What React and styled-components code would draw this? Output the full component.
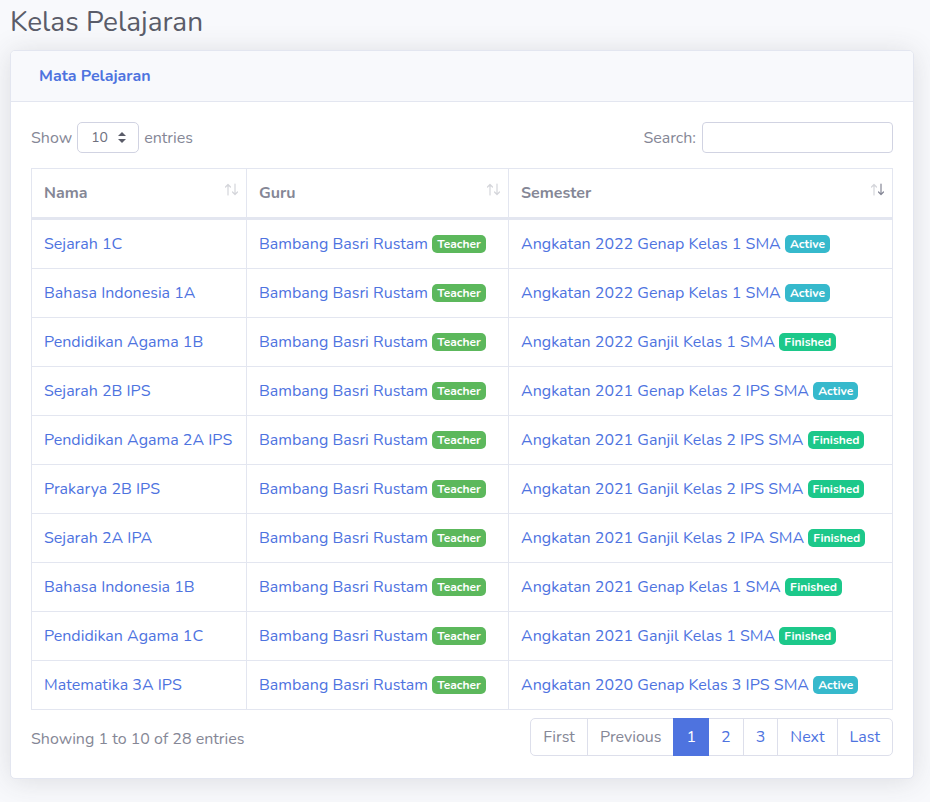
import React from "react";
import styled, { createGlobalStyle } from "styled-components";

const GlobalStyle = createGlobalStyle`
  * { box-sizing: border-box; }
  body {
    margin: 0;
    background: #f8f9fc;
    font-family: "Nunito", "Lato", "Liberation Sans", sans-serif;
    color: #858796;
    font-size: 16px;
    line-height: 1.5;
  }
`;

const rows = [
  ["Sejarah 1C", "Angkatan 2022 Genap Kelas 1 SMA", "active"],
  ["Bahasa Indonesia 1A", "Angkatan 2022 Genap Kelas 1 SMA", "active"],
  ["Pendidikan Agama 1B", "Angkatan 2022 Ganjil Kelas 1 SMA", "finished"],
  ["Sejarah 2B IPS", "Angkatan 2021 Genap Kelas 2 IPS SMA", "active"],
  ["Pendidikan Agama 2A IPS", "Angkatan 2021 Ganjil Kelas 2 IPS SMA", "finished"],
  ["Prakarya 2B IPS", "Angkatan 2021 Ganjil Kelas 2 IPS SMA", "finished"],
  ["Sejarah 2A IPA", "Angkatan 2021 Ganjil Kelas 2 IPA SMA", "finished"],
  ["Bahasa Indonesia 1B", "Angkatan 2021 Genap Kelas 1 SMA", "finished"],
  ["Pendidikan Agama 1C", "Angkatan 2021 Ganjil Kelas 1 SMA", "finished"],
  ["Matematika 3A IPS", "Angkatan 2020 Genap Kelas 3 IPS SMA", "active"],
];

const badgeColors = {
  teacher: "#5cb85c",
  active: "#36b9cc",
  finished: "#1cc88a",
};

const App = () => {
  return (
    <Page>
      <GlobalStyle />
      <Title>Kelas Pelajaran</Title>
      <Card>
        <CardHeader>Mata Pelajaran</CardHeader>
        <CardBody>
          <Controls>
            <Label>
              Show
              <Select>
                <span>10</span>
                <svg width="8" height="11" viewBox="0 0 8 11">
                  <path d="M4 0 L8 4 L0 4 Z M4 11 L8 7 L0 7 Z" fill="#5a5c69" />
                </svg>
              </Select>
              entries
            </Label>
            <Label>
              Search:
              <SearchInput />
            </Label>
          </Controls>
          <Table>
            <colgroup>
              <col style={{ width: 215 }} />
              <col style={{ width: 262 }} />
              <col />
            </colgroup>
            <thead>
              <tr>
                <Th>
                  Nama
                  <Sort />
                </Th>
                <Th>
                  Guru
                  <Sort />
                </Th>
                <Th>
                  Semester
                  <Sort desc />
                </Th>
              </tr>
            </thead>
            <tbody>
              {rows.map(([name, semester, status]) => (
                <tr key={name}>
                  <Td>
                    <Link>{name}</Link>
                  </Td>
                  <Td>
                    <Link>Bambang Basri Rustam</Link>{" "}
                    <Badge $color={badgeColors.teacher}>Teacher</Badge>
                  </Td>
                  <Td>
                    <Link>{semester}</Link>{" "}
                    <Badge $color={badgeColors[status]}>
                      {status === "active" ? "Active" : "Finished"}
                    </Badge>
                  </Td>
                </tr>
              ))}
            </tbody>
          </Table>
          <Footer>
            <Info>Showing 1 to 10 of 28 entries</Info>
            <Pagination>
              <PageItem $disabled>First</PageItem>
              <PageItem $disabled>Previous</PageItem>
              <PageItem $active>1</PageItem>
              <PageItem>2</PageItem>
              <PageItem>3</PageItem>
              <PageItem>Next</PageItem>
              <PageItem>Last</PageItem>
            </Pagination>
          </Footer>
        </CardBody>
      </Card>
    </Page>
  );
};

// up/down arrows used by the sortable headers
const Sort = ({ desc }) => (
  <SortIcon>
    <svg width="15" height="13" viewBox="0 0 15 13">
      <g fill="none" strokeWidth="1.2" strokeLinecap="round" strokeLinejoin="round">
        <path d="M4 12 V1.5 M1.5 4 L4 1.5 L6.5 4" stroke="#858796" strokeOpacity="0.35" />
        <path
          d="M11 1 V11.5 M8.5 9 L11 11.5 L13.5 9"
          stroke="#858796"
          strokeOpacity={desc ? 1 : 0.35}
        />
      </g>
    </svg>
  </SortIcon>
);

export default App;

const Page = styled.div`
  padding: 0 16px 24px 10px;
`;

const Title = styled.h1`
  margin: 0 0 7px 0;
  padding-top: 2px;
  font-size: 28px;
  font-weight: 400;
  line-height: 41px;
  color: #5a5c69;
`;

const Card = styled.div`
  background: #fff;
  border: 1px solid #e3e6f0;
  border-radius: 5px;
  box-shadow: 0 2px 28px 0 rgba(58, 59, 69, 0.15);
  overflow: hidden;
`;

const CardHeader = styled.div`
  background: #f8f9fc;
  border-bottom: 1px solid #e3e6f0;
  padding: 13px 28px;
  font-size: 16px;
  font-weight: 700;
  color: #4e73df;
  line-height: 24px;
`;

const CardBody = styled.div`
  padding: 20px 20px 22px;
`;

const Controls = styled.div`
  display: flex;
  justify-content: space-between;
  align-items: center;
  margin-bottom: 15px;
`;

const Label = styled.label`
  display: flex;
  align-items: center;
  gap: 5px;
  font-size: 16px;
`;

const Select = styled.div`
  width: 62px;
  height: 31px;
  border: 1px solid #d1d3e2;
  border-radius: 5px;
  display: flex;
  align-items: center;
  justify-content: space-between;
  padding: 0 12px 0 13px;
  font-size: 14px;
  color: #6e707e;
`;

const SearchInput = styled.div`
  width: 191px;
  height: 31px;
  border: 1px solid #d1d3e2;
  border-radius: 4px;
  margin-left: 1px;
`;

const Table = styled.table`
  width: 100%;
  border-collapse: collapse;
  table-layout: fixed;
  border: 1px solid #e3e6f0;
`;

const Th = styled.th`
  position: relative;
  text-align: left;
  padding: 12px 12px;
  font-weight: 700;
  color: #858796;
  border: 1px solid #e3e6f0;
  border-bottom: 3px solid #e3e6f0;
  line-height: 24px;
`;

const SortIcon = styled.span`
  position: absolute;
  right: 7px;
  top: 14px;
  display: flex;
`;

const Td = styled.td`
  padding: 12px 12px;
  border: 1px solid #e3e6f0;
  line-height: 24px;
  white-space: nowrap;
`;

const Link = styled.a`
  color: #4e73df;
  text-decoration: none;
`;

const Badge = styled.span`
  display: inline-block;
  background: ${(p) => p.$color};
  color: #fff;
  font-size: 12px;
  font-weight: 700;
  line-height: 1;
  padding: 3px 5px;
  border-radius: 5px;
  vertical-align: 1px;
`;

const Footer = styled.div`
  display: flex;
  justify-content: space-between;
  align-items: center;
  margin-top: 8px;
`;

const Info = styled.div`
  padding-top: 3px;
`;

const Pagination = styled.div`
  display: flex;
  border-radius: 5px;
`;

const PageItem = styled.span`
  display: block;
  padding: 6px 12px;
  line-height: 24px;
  border: 1px solid #dddfeb;
  margin-left: -1px;
  color: ${(p) => (p.$active ? "#fff" : p.$disabled ? "#858796" : "#4e73df")};
  background: ${(p) => (p.$active ? "#4e73df" : "#fff")};
  border-color: ${(p) => (p.$active ? "#4e73df" : "#dddfeb")};
  position: relative;
  z-index: ${(p) => (p.$active ? 1 : 0)};
  &:first-child {
    border-radius: 5px 0 0 5px;
    margin-left: 0;
  }
  &:last-child {
    border-radius: 0 5px 5px 0;
  }
`;
